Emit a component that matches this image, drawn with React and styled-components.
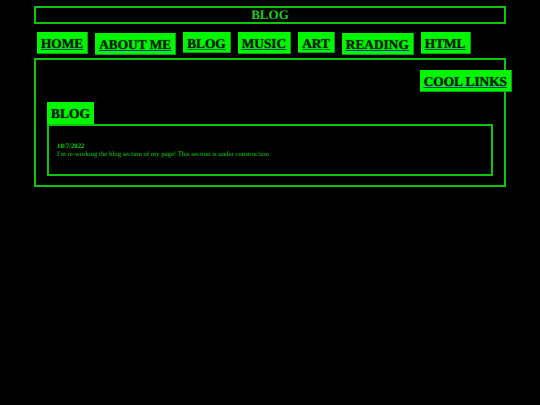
import React from 'react'
import styled, { createGlobalStyle } from 'styled-components'

const GlobalStyle = createGlobalStyle`
html, body {
  margin: 0;
  background: #000;
  font-family: "Liberation Serif", "Times New Roman", serif;
  text-rendering: geometricPrecision;
}
`;
const Page = styled.div`
width: 472px;
margin-left: 34px;
padding-top: 6px;
`;
const TitleBar = styled.h1`
height: 18px;
box-sizing: border-box;
margin: 0;
border: 2px solid #0fc40f;
color: #22cc22;
font-size: 13px;
line-height: 14px;
text-align: center;
`;
const Nav = styled.nav`
display: flex;
align-items: flex-start;
gap: 7px;
height: 26px;
margin: 8px 0 0 3px;
`;
const Tab = styled.a`
display: block;
box-sizing: border-box;
height: ${props => props.tall ? 22 : 21}px;
margin-top: ${props => props.drop}px;
padding: 0 4px;
background: #00f500;
border-right: 1px solid #00a800;
border-bottom: 1px solid #00a800;
color: #042004;
font-size: 13.33px;
font-weight: bold;
line-height: 24px;
text-decoration: underline;
text-decoration-color: ${props => props.line};
text-shadow: 0 0 1px #0a4a0a;
white-space: nowrap;
`;
const Main = styled.main`
box-sizing: border-box;
height: 129px;
border: 2px solid #0fc40f;
padding: 10px 11px 0;
`;
const CoolRow = styled.div`
display: flex;
justify-content: flex-end;
margin-right: -19px;
`;
const CoolLinks = styled(Tab)`
height: 22px;
`;
const SectionTab = styled.h2`
width: 47px;
height: 22px;
box-sizing: border-box;
margin: 10px 0 0;
background: #00f500;
color: #042004;
font-size: 13.5px;
line-height: 24px;
text-align: center;
text-shadow: 0 0 1px #0a4a0a;
`;
const Post = styled.section`
box-sizing: border-box;
height: 52px;
border: 2px solid #0fc40f;
padding: 16.5px 8px 0;
color: #18c818;
font-size: 6.75px;
line-height: 8px;
`;
const PostDate = styled.div`
font-weight: bold;
`;

const tabs = [
  { label: 'HOME', drop: 0, tall: true, line: '#0a3a6a' },
  { label: 'ABOUT ME', drop: 1, tall: true, line: '#1030a0' },
  { label: 'BLOG', drop: 0, tall: false, line: '#0a6a4a' },
  { label: 'MUSIC', drop: 0, tall: true, line: '#0a3a6a' },
  { label: 'ART', drop: 0, tall: false, line: '#0a6a4a' },
  { label: 'READING', drop: 1, tall: true, line: '#1030a0' },
  { label: 'HTML', drop: 0, tall: true, line: '#0a3a6a' },
];

const App = () => {
  return (
    <Page>
      <GlobalStyle />
      <TitleBar>BLOG</TitleBar>
      <Nav>
        {tabs.map(tab => (
          <Tab key={tab.label} drop={tab.drop} tall={tab.tall} line={tab.line}>{tab.label}</Tab>
        ))}
      </Nav>
      <Main>
        <CoolRow>
          <CoolLinks drop={0} line="#1030a0">COOL LINKS</CoolLinks>
        </CoolRow>
        <SectionTab>BLOG</SectionTab>
        <Post>
          <PostDate>10/7/2022</PostDate>
          I'm re-working the blog section of my page! This section is under construction
        </Post>
      </Main>
    </Page>
  )
}

export default App
